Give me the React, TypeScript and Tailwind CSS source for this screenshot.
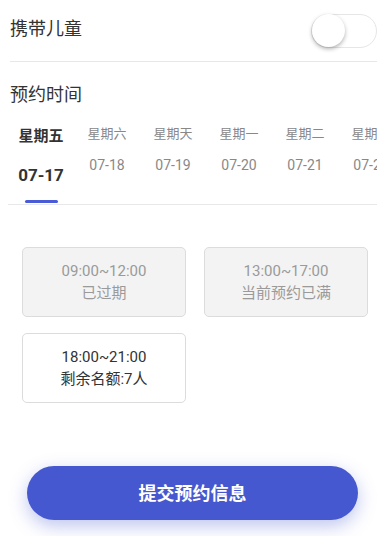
import { useState } from 'react'

const days = [
  { week: '星期五', date: '07-17' },
  { week: '星期六', date: '07-18' },
  { week: '星期天', date: '07-19' },
  { week: '星期一', date: '07-20' },
  { week: '星期二', date: '07-21' },
  { week: '星期三', date: '07-22' },
]

const slots = [
  { time: '09:00~12:00', note: '已过期', disabled: true },
  { time: '13:00~17:00', note: '当前预约已满', disabled: true },
  { time: '18:00~21:00', note: '剩余名额:7人', disabled: false },
]

export default function App() {
  const [withKids, setWithKids] = useState(false)
  const [active, setActive] = useState(0)

  return (
    <div
      className="flex h-[536px] w-[392px] flex-col overflow-hidden bg-white text-[#333]"
      style={{ fontFamily: 'Roboto, "Noto Sans CJK SC", sans-serif' }}
    >
      <div className="mx-[10px] mr-[15px] flex h-[62px] items-center justify-between border-b border-[#e8e8e8]">
        <span className="pb-[4px] text-[18px]">携带儿童</span>
        <button
          onClick={() => setWithKids(!withKids)}
          className="flex h-[34px] w-[66px] items-center rounded-full border border-[#e6e6e6] bg-white"
        >
          <span className="h-[33px] w-[33px] rounded-full bg-white shadow-[0_2px_4px_rgba(0,0,0,0.3)]" />
        </button>
      </div>

      <div className="px-[10px] pt-[20px] text-[18px] leading-[26px]">预约时间</div>

      {/* date tabs, the last one runs past the edge like the real scroller */}
      <div className="mx-[8px] mr-[15px] mt-[13px] flex overflow-hidden border-b border-[#e8e8e8]">
        {days.map((d, i) => {
          const on = i === active
          return (
            <button
              key={d.date}
              onClick={() => setActive(i)}
              className="flex w-[66px] shrink-0 flex-col items-center"
            >
              {on ? (
                <>
                  <span className="mt-[5px] text-[15px] font-bold leading-[20px] text-[#333]">{d.week}</span>
                  <span className="mt-[18px] text-[17px] font-bold leading-[22px] text-[#333]">{d.date}</span>
                  <span className="mb-[1px] mt-[14px] h-[3px] w-[33px] rounded-full bg-[#4a5bd6]" />
                </>
              ) : (
                <>
                  <span className="mt-[3px] text-[13px] leading-[20px] text-[#888]">{d.week}</span>
                  <span className="mt-[11px] text-[14px] leading-[20px] text-[#888]">{d.date}</span>
                </>
              )}
            </button>
          )
        })}
      </div>

      <div className="mx-[22px] mt-[42px] grid w-[346px] grid-cols-2 gap-x-[18px] gap-y-[16px]">
        {slots.map((s) => (
          <div
            key={s.time}
            className={
              s.disabled
                ? 'flex h-[70px] flex-col items-center justify-center rounded-[5px] border border-[#dcdcdc] bg-[#f3f3f3] text-[#9a9a9a]'
                : 'flex h-[70px] flex-col items-center justify-center rounded-[5px] border border-[#dcdcdc] bg-white text-[#333]'
            }
          >
            <span className="text-[15px] leading-[22px]">{s.time}</span>
            <span className="text-[15px] leading-[22px]">{s.note}</span>
          </div>
        ))}
      </div>

      <button className="ml-[27px] mt-[63px] h-[54px] w-[331px] rounded-full bg-[#4658cf] text-[18px] font-bold text-white shadow-[0_6px_18px_rgba(70,88,207,0.35)]">
        提交预约信息
      </button>
    </div>
  )
}
